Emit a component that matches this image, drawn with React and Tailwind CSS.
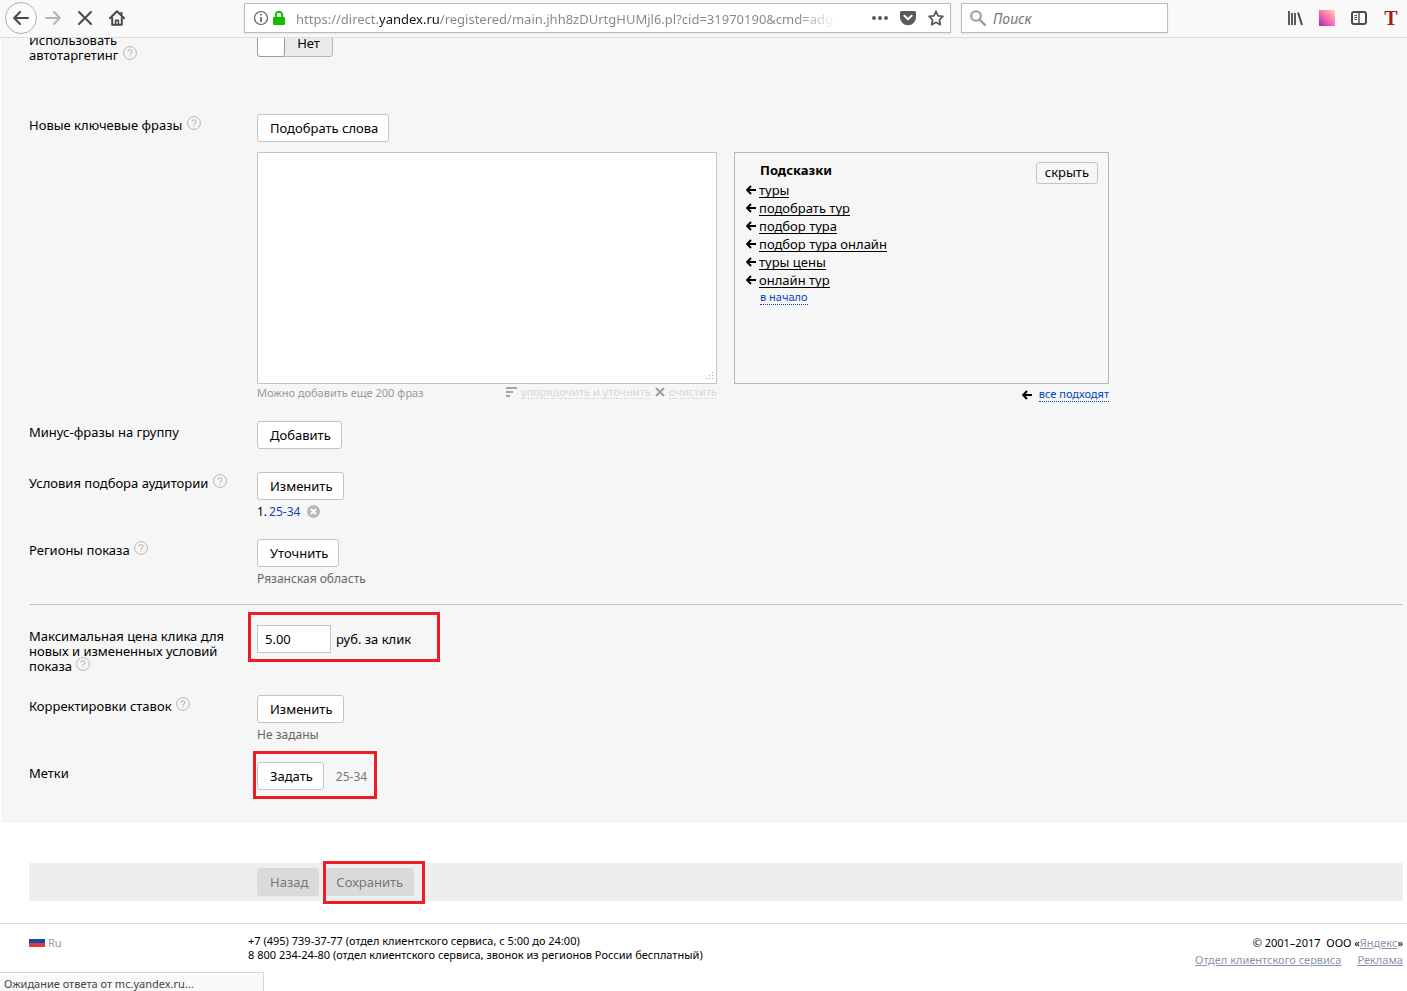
import { useState } from "react";
import clsx from "clsx";

const hints = [
  "туры",
  "подобрать тур",
  "подбор тура",
  "подбор тура онлайн",
  "туры цены",
  "онлайн тур",
];

const pageUrl =
  "https://direct.yandex.ru/registered/main.jhh8zDUrtgHUMjl6.pl?cid=31970190&cmd=adgroup";

const Help = () => (
  <button
    type="button"
    aria-label="Справка"
    className="-my-1 ml-px inline-block align-baseline text-[#b5b5b5]"
  >
    <svg width="14" height="14" viewBox="0 0 14 14" fill="none" stroke="currentColor">
      <circle cx="7" cy="7" r="6.4" />
      <path d="M5 5.6C5 4.4 5.8 3.8 7 3.8s2 .7 2 1.7c0 1.3-2 1.4-2 2.9M7 9.4v1.2" strokeWidth="1.1" />
    </svg>
  </button>
);

const ArrowLeft = () => (
  <svg width="10" height="10" viewBox="0 0 10 10" fill="none" stroke="#000" strokeWidth="2" className="shrink-0">
    <path d="M5 1 1.2 5 5 9M1.5 5H10" />
  </svg>
);

const Button = ({ children, muted }) => (
  <button
    type="button"
    className={clsx(
      "block h-7 rounded-[3px] border pl-3 pr-2.5 text-[13px] leading-[15px]",
      muted ? "border-[#dadada] bg-[#dadada] text-[#777]" : "border-[#c4c4c4] bg-white"
    )}
  >
    {children}
  </button>
);

// Red frame drawn over a control
const Mark = ({ className }) => (
  <span className={clsx("pointer-events-none absolute border-3 border-[#ee1c25]", className)} />
);

const Row = ({ label, help, htmlFor, className, children }) => (
  <div className={clsx("grid grid-cols-[204px_1fr] gap-x-6", className)}>
    <div className="pt-1 leading-[15px]">
      {htmlFor ? <label htmlFor={htmlFor}>{label}</label> : label} {help && <Help />}
    </div>
    <div>{children}</div>
  </div>
);

const BrowserBar = () => (
  <header className="flex h-[38px] items-center border-b border-[#dcdcdc] bg-[#f9f9f9] pb-px pl-[5px] text-[#4a4a4a]">
    <button
      type="button"
      aria-label="Назад"
      className="flex size-8 items-center justify-center rounded-full border border-[#b1b1b1] bg-[#fcfcfc]"
    >
      <svg width="16" height="16" viewBox="0 0 16 16" fill="none" stroke="currentColor" strokeWidth="2" strokeLinecap="round" strokeLinejoin="round">
        <path d="M7 2 1.2 8 7 14M1.5 8H15" />
      </svg>
    </button>
    <button type="button" aria-label="Вперёд" className="ml-2 text-[#b4b4b4]">
      <svg width="16" height="16" viewBox="0 0 16 16" fill="none" stroke="currentColor" strokeWidth="2" strokeLinecap="round" strokeLinejoin="round">
        <path d="M9 2 14.8 8 9 14M14.5 8H1" />
      </svg>
    </button>
    <button type="button" aria-label="Остановить" className="ml-4">
      <svg width="16" height="16" viewBox="0 0 16 16" fill="none" stroke="currentColor" strokeWidth="2" strokeLinecap="round">
        <path d="M2 2 14 14M14 2 2 14" />
      </svg>
    </button>
    <button type="button" aria-label="Домой" className="ml-4">
      <svg width="16" height="16" viewBox="0 0 16 16" fill="none" stroke="currentColor" strokeWidth="2" strokeLinecap="round" strokeLinejoin="round">
        <path d="M1 8.3 8 1.3l7 7" />
        <path d="M3.2 8v6.8h9.6V8" />
        <path d="M6.6 15v-4.6h2.8V15" strokeWidth="1.6" />
        <path d="M12.4 2v3" strokeLinecap="butt" />
      </svg>
    </button>

    <div className="ml-[119px] flex h-[30px] flex-1 items-center border border-[#bcbcbc] bg-white pl-2 pr-1.5 shadow-[0_1px_2px_rgba(0,0,0,0.08)]">
      <svg width="16" height="16" viewBox="0 0 16 16" fill="none" stroke="#5a5a5a">
        <circle cx="8" cy="8" r="6.5" strokeWidth="1.2" />
        <path d="M8 7v5" strokeWidth="1.6" />
        <path d="M8 4v1.6" strokeWidth="1.6" />
      </svg>
      <svg width="14" height="16" viewBox="0 0 14 16" className="ml-[3px] shrink-0">
        <rect x="1" y="7" width="12" height="8" rx="1" fill="#12bc00" />
        <path d="M3.8 8V5a3.2 3.2 0 0 1 6.4 0v3" fill="none" stroke="#12bc00" strokeWidth="2" />
      </svg>
      <input
        aria-label="Адрес"
        defaultValue={pageUrl}
        className="ml-2.5 h-7 min-w-0 flex-1 bg-[linear-gradient(90deg,#858585_82px,#111_82px,#111_143px,#858585_143px,#858585_500px,transparent_540px)] bg-clip-text pt-px text-[13px] text-transparent outline-none"
      />
      <button type="button" aria-label="Действия" className="ml-6">
        <svg width="16" height="16" viewBox="0 0 16 16" fill="#5a5a5a">
          <circle cx="2" cy="8" r="2" />
          <circle cx="8" cy="8" r="2" />
          <circle cx="14" cy="8" r="2" />
        </svg>
      </button>
      <button type="button" aria-label="Pocket" className="ml-3">
        <svg width="16" height="16" viewBox="0 0 16 16">
          <path d="M1.6 1h12.8A1.6 1.6 0 0 1 16 2.6v5a8 7.6 0 0 1-16 0v-5A1.6 1.6 0 0 1 1.6 1z" fill="#5a5a5a" />
          <path d="M4.4 5.8 8 9.3l3.6-3.5" fill="none" stroke="#fff" strokeWidth="2" strokeLinecap="round" strokeLinejoin="round" />
        </svg>
      </button>
      <button type="button" aria-label="Закладка" className="ml-3">
        <svg width="16" height="16" viewBox="0 0 16 16" fill="none" stroke="#5a5a5a" strokeWidth="1.8" strokeLinejoin="round">
          <path d="m8 1.3 2.1 4.5 4.8.6-3.5 3.4.9 4.9L8 12.3l-4.3 2.4.9-4.9L1.1 6.4l4.8-.6z" />
        </svg>
      </button>
    </div>

    <div className="ml-2.5 flex h-[30px] w-[207px] items-center border border-[#bcbcbc] bg-white pl-2 shadow-[0_1px_2px_rgba(0,0,0,0.08)]">
      <svg width="16" height="16" viewBox="0 0 16 16" fill="none" stroke="#9a9a9a" strokeWidth="2" className="shrink-0">
        <circle cx="6" cy="6" r="4.8" />
        <path d="m9.5 9.5 5.5 5.5" strokeLinecap="round" strokeWidth="2.4" />
      </svg>
      <input
        type="search"
        aria-label="Поиск"
        placeholder="Поиск"
        className="ml-[7px] min-w-0 flex-1 pt-px text-[14px] italic outline-none placeholder:text-[#757575]"
      />
    </div>

    <div className="ml-[119px] mr-2 flex gap-4">
      <button type="button" aria-label="Библиотека">
        <svg width="16" height="16" viewBox="0 0 16 16" fill="none" stroke="currentColor" strokeWidth="2">
          <path d="M2 1v14M5 3v12M8 3v12" strokeWidth="1.8" />
          <path d="m11 2.5 4 12.5" />
        </svg>
      </button>
      <button type="button" aria-label="Расширение" className="size-4 bg-linear-to-tr from-[#9c27b0] via-[#ff6fae] to-[#ffd2b8]" />
      <button type="button" aria-label="Боковая панель">
        <svg width="16" height="16" viewBox="0 0 16 16" fill="none" stroke="currentColor">
          <rect x="1" y="2" width="14" height="12" rx="2" strokeWidth="2" />
          <path d="M8 2v12" strokeWidth="1.4" />
          <path d="M3.5 5.5H6M3.5 7.5H6M3.5 9.5H6" />
        </svg>
      </button>
      <button
        type="button"
        aria-label="Текст"
        className="size-4 font-['Liberation_Serif',serif] text-[20px] font-bold leading-4 text-[#a81c10]"
      >
        T
      </button>
    </div>
  </header>
);

const Phrases = () => {
  const [phrases, setPhrases] = useState("");

  return (
    <>
      <Button>Подобрать слова</Button>
      <div className="mt-2.5 flex gap-[17px]">
        <div className="w-[460px]">
          <div className="relative">
            <textarea
              id="phrases"
              value={phrases}
              onChange={(e) => setPhrases(e.target.value)}
              className="block h-[232px] w-full resize-none border border-[#c4c4c4] bg-white p-2 outline-none"
            />
            <svg width="9" height="9" viewBox="0 0 9 9" fill="#a8a8a8" className="absolute bottom-[3px] right-[3px]">
              <path d="M7 0h1v1H7zM4 3h1v1H4zM7 3h1v1H7zM1 6h1v1H1zM4 6h1v1H4zM7 6h1v1H7z" />
            </svg>
          </div>
          <div className="flex h-4 items-center text-[11px] leading-[15px] text-[#999]">
            <span className="flex-1">Можно добавить еще 200 фраз</span>
            <svg width="11" height="10" viewBox="0 0 11 10" fill="#a5a5a5">
              <path d="M0 0h11v2H0zM0 4h7v2H0zM0 8h4v2H0z" />
            </svg>
            <button type="button" disabled className="ml-1 border-b border-dotted border-[#d0d0d0] leading-[13px] text-[#d8d8d8]">
              упорядочить и уточнить
            </button>
            <svg width="10" height="10" viewBox="0 0 10 10" stroke="#a0a0a0" strokeWidth="2.2" className="ml-1">
              <path d="m1 1 8 8M9 1 1 9" />
            </svg>
            <button type="button" disabled className="ml-1 border-b border-dotted border-[#d0d0d0] leading-[13px] text-[#d8d8d8]">
              очистить
            </button>
          </div>
        </div>

        <div className="w-[375px]">
          <div className="flex h-[232px] items-start justify-between border border-[#b8b8b8] pl-[11px] pr-2.5 pt-[9px]">
            <div>
              <h2 className="mb-[3px] pl-3.5 font-bold leading-4">Подсказки</h2>
              <ul>
                {hints.map((hint) => (
                  <li key={hint} className="flex h-[18px] items-center gap-[3px]">
                    <ArrowLeft />
                    <a href="#phrases" className="border-b border-black leading-[14px]">
                      {hint}
                    </a>
                  </li>
                ))}
              </ul>
              <a href="#top" className="ml-3.5 border-b border-dotted border-[#04b] text-[11px] leading-[14px] text-[#04b]">
                в начало
              </a>
            </div>
            <button type="button" className="h-[22px] rounded-[3px] border border-[#c4c4c4] px-2 pb-px text-[13px] leading-[15px]">
              скрыть
            </button>
          </div>
          <div className="flex h-[21px] items-center justify-end gap-[7px] text-[11px]">
            <ArrowLeft />
            <a href="#phrases" className="border-b border-dotted border-[#04b] leading-[14px] text-[#04b]">
              все подходят
            </a>
          </div>
        </div>
      </div>
    </>
  );
};

const Footer = () => (
  <footer className="mt-[22px] flex border-t border-[#dcdcdc] pl-[29px] pr-1 text-[11px] leading-[14px]">
    <div className="w-[219px] pt-3">
      <a href="#lang" className="flex items-center gap-[3px] text-[#8f9bb3]">
        <svg width="16" height="8" viewBox="0 0 16 8">
          <path d="M0 0h16v4H0z" fill="#0d4fa0" />
          <path d="M0 4h16v4H0z" fill="#e5363d" />
        </svg>
        Ru
      </a>
    </div>
    <div className="flex-1 pt-2.5">
      <p>+7 (495) 739-37-77 (отдел клиентского сервиса, с 5:00 до 24:00)</p>
      <p>8 800 234-24-80 (отдел клиентского сервиса, звонок из регионов России бесплатный)</p>
    </div>
    <div className="pt-3 text-right">
      <p>
        © 2001–2017 &nbsp;ООО «<a href="#yandex" className="text-[#8c93aa] underline">Яндекс</a>»
      </p>
      <p className="mt-[3px] flex justify-end gap-4 text-[#8c93aa] underline">
        <a href="#support">Отдел клиентского сервиса</a>
        <a href="#ads">Реклама</a>
      </p>
    </div>
  </footer>
);

const App = () => {
  const [price, setPrice] = useState("5.00");

  return (
    <div className="flex min-h-screen flex-col bg-white font-['Noto_Sans',sans-serif] text-[13px] leading-[15px] text-black">
      <BrowserBar />

      <main className="ml-px overflow-hidden bg-[#f6f6f6] pb-[33px] pl-7 pr-1">
        <Row label={<>Использовать<br />автотаргетинг</>} help className="-mt-[9px]">
          <button
            type="button"
            role="switch"
            aria-checked="false"
            className="flex h-7 w-[76px] rounded-[3px] border border-[#b5b5b5] bg-[#eaeaea]"
          >
            <span className="-my-px -ml-px h-7 w-7 rounded-[3px] border border-[#9c9c9c] bg-white" />
            <span className="flex-1 self-center">Нет</span>
          </button>
        </Row>
        <Row label="Новые ключевые фразы" help htmlFor="phrases" className="mt-[51px]">
          <Phrases />
        </Row>
        <Row label="Минус-фразы на группу" className="mt-4">
          <Button>Добавить</Button>
        </Row>
        <Row label="Условия подбора аудитории" help className="mt-[23px]">
          <Button>Изменить</Button>
          <div className="flex h-[22px] items-center text-[12px]">
            1.
            <a href="#audience" className="ml-0.5 text-[#1a3dc1]">25-34</a>
            <button type="button" aria-label="Удалить" className="ml-[7px]">
              <svg width="13" height="13" viewBox="0 0 13 13">
                <circle cx="6.5" cy="6.5" r="6.5" fill="#b9b9b9" />
                <path d="m4 4 5 5M9 4 4 9" stroke="#fff" strokeWidth="2" />
              </svg>
            </button>
          </div>
        </Row>
        <Row label="Регионы показа" help className="mt-[17px]">
          <Button>Уточнить</Button>
          <div className="flex h-[22px] items-center text-[12px] text-[#666]">Рязанская область</div>
        </Row>

        <hr className="mt-[15px] border-[#c8c8c8]" />

        <Row
          label="Максимальная цена клика для новых и измененных условий показа"
          help
          htmlFor="price"
          className="mt-5"
        >
          <div className="relative flex w-fit items-center gap-[5px] pr-[29px]">
            <input
              id="price"
              value={price}
              onChange={(e) => setPrice(e.target.value)}
              className="h-7 w-[74px] border border-[#c4c4c4] bg-white px-[7px] outline-none"
            />
            <span>руб. за клик</span>
            <Mark className="-bottom-[9px] -left-[9px] -top-[13px] right-0" />
          </div>
        </Row>
        <Row label="Корректировки ставок" help className="mt-[21px]">
          <Button>Изменить</Button>
          <div className="flex h-[22px] items-center text-[12px] text-[#666]">Не заданы</div>
        </Row>
        <Row label="Метки" className="mt-[17px]">
          <div className="relative flex w-fit items-center gap-3 pr-2.5">
            <Button>Задать</Button>
            <span className="text-[12px] text-[#777]">25-34</span>
            <Mark className="-bottom-[9px] -left-1 -top-[11px] right-0" />
          </div>
        </Row>
      </main>

      <div className="ml-[29px] mr-1 mt-10 flex h-[38px] items-center gap-1 bg-[#eee] pl-[228px]">
        <Button muted>Назад</Button>
        <div className="relative">
          <Button muted>Сохранить</Button>
          <Mark className="-bottom-2 -right-[11px] -top-[7px] left-0" />
        </div>
      </div>

      <Footer />

      <div className="fixed bottom-0 left-0 h-[19px] w-[264px] border-r border-t border-[#d8d8d8] bg-[#f9f9f9] px-1 pt-[3px] text-[11px] leading-[15px] text-[#444]">
        Ожидание ответа от mc.yandex.ru...
      </div>
    </div>
  );
};

export default App;
